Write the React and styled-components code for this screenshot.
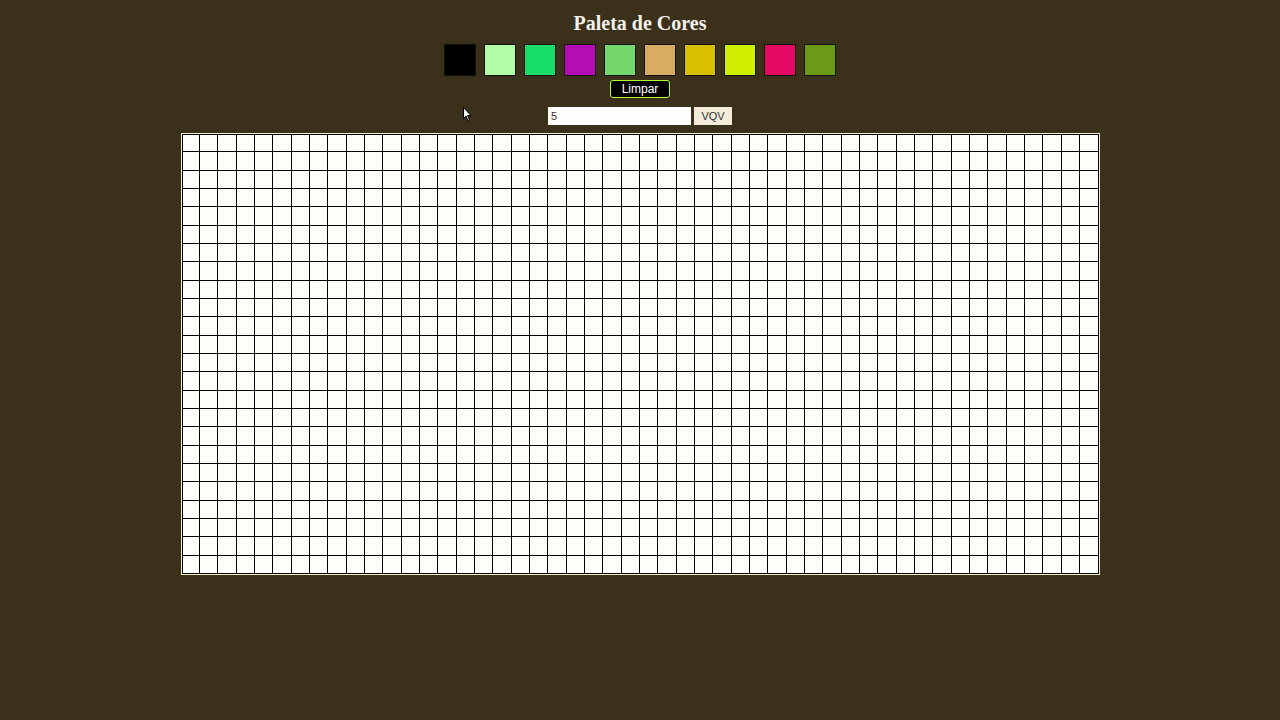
import React from 'react'
import styled, { createGlobalStyle } from 'styled-components';

const colors = [
  '#000000', '#b2fca8', '#18de6a', '#b40db6', '#74d86c',
  '#d8ac62', '#d8bf00', '#d0ee00', '#e60a64', '#6c9a16',
];

const COLS = 50;
const ROWS = 24;

const GlobalStyle = createGlobalStyle`
  html, body {
    margin: 0;
    padding: 0;
    background-color: #3b3019;
    min-height: 720px;
  }
`;

const Page = styled.div`
  position: relative;
  width: 1280px;
  height: 720px;
  display: flex;
  flex-direction: column;
  align-items: center;
  font-family: "Liberation Sans", Arial, sans-serif;
`;

const Title = styled.h1`
  margin: 11px 0 0;
  height: 24px;
  line-height: 24px;
  font-family: "Liberation Serif", "Times New Roman", serif;
  font-size: 20px;
  font-weight: bold;
  color: #f4f2ee;
`;

const Palette = styled.div`
  display: flex;
  gap: 8px;
  margin-top: 9px;
`;

const Swatch = styled.div`
  width: 30px;
  height: 30px;
  border: 1px solid #111;
  background-color: ${props => props.color};
`;

const ClearButton = styled.button`
  margin-top: 4px;
  width: 60px;
  height: 18px;
  padding: 0;
  border: 1px solid #adff2f;
  border-radius: 3px;
  background-color: #000;
  color: #fff;
  font-family: "Liberation Sans", Arial, sans-serif;
  font-size: 12px;
  line-height: 14px;
`;

const Controls = styled.div`
  display: flex;
  gap: 3px;
  margin-top: 9px;
`;

const SizeInput = styled.input`
  width: 143px;
  height: 18px;
  box-sizing: border-box;
  border: none;
  padding: 0 3px;
  background-color: #fffdfc;
  color: #333;
  font-family: "Liberation Sans", Arial, sans-serif;
  font-size: 11px;
  outline: none;
`;

const GoButton = styled.button`
  width: 38px;
  height: 18px;
  padding: 0;
  border: none;
  background-color: #f2ecd8;
  color: #333;
  font-family: "Liberation Sans", Arial, sans-serif;
  font-size: 11px;
`;

const Board = styled.div`
  margin-top: 8px;
  width: 917px;
  height: 440px;
  border: 1px solid #f0efc8;
  display: grid;
  grid-template-columns: repeat(${COLS}, 1fr);
  grid-template-rows: repeat(${ROWS}, 1fr);
  background-color: #fdfdfa;
  box-sizing: content-box;
`;

const Pixel = styled.div`
  border-right: 1px solid #000;
  border-bottom: 1px solid #000;
  background-color: #fdfdfa;
  &:nth-child(-n + ${COLS}) {
    border-top: 1px solid #000;
  }
  &:nth-child(${COLS}n + 1) {
    border-left: 1px solid #000;
  }
`;

const Cursor = styled.svg`
  position: absolute;
  left: 463px;
  top: 107px;
`;

export default function App() {
  const cells = [];
  for (let i = 0; i < COLS * ROWS; i++) cells.push(<Pixel key={i} />);

  return (
    <Page>
      <GlobalStyle />
      <Title>Paleta de Cores</Title>
      <Palette>
        {colors.map((c, i) => <Swatch key={i} color={c} />)}
      </Palette>
      <ClearButton>Limpar</ClearButton>
      <Controls>
        <SizeInput defaultValue="5" />
        <GoButton>VQV</GoButton>
      </Controls>
      <Board>{cells}</Board>

      {/* mouse pointer */}
      <Cursor width="10" height="15" viewBox="0 0 10 15">
        <path d="M0.5 0.5 L0.5 11.5 L3 9 L5 13.5 L6.5 12.8 L4.6 8.5 L8 8.5 Z" fill="#fff" stroke="#000" strokeWidth="1" />
      </Cursor>
    </Page>
  )
}
